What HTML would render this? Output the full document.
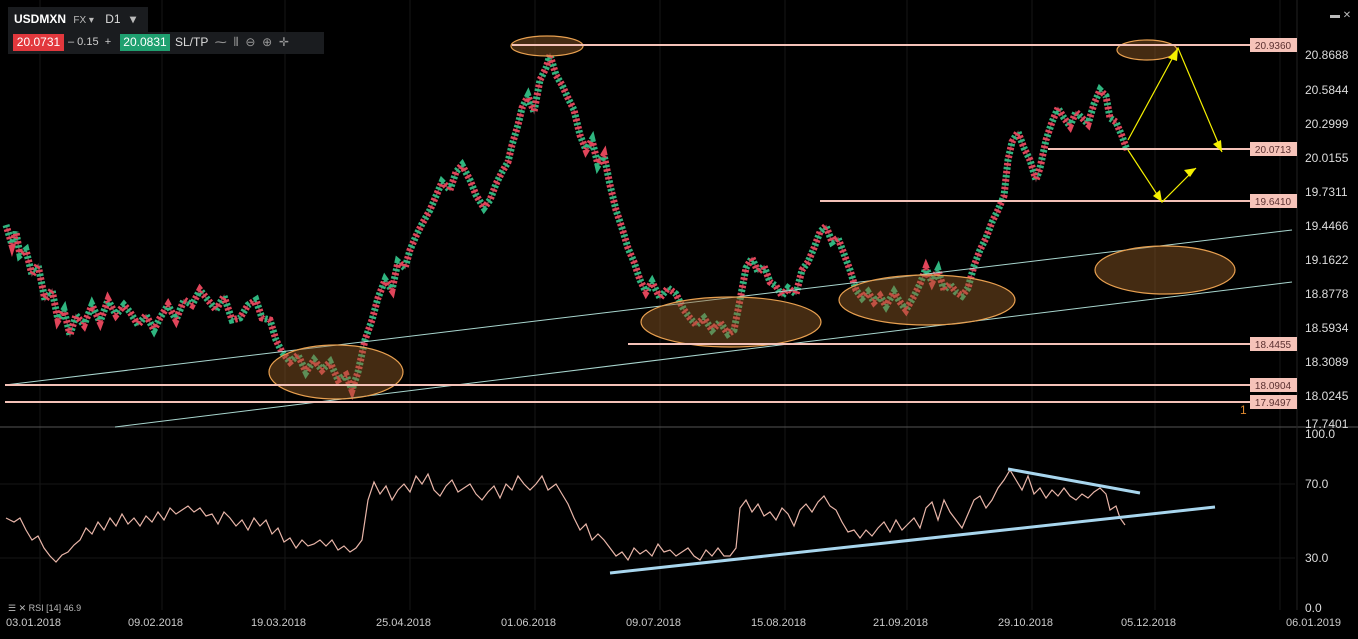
<!DOCTYPE html>
<html><head><meta charset="utf-8"><style>
html,body{margin:0;padding:0;background:#000;width:1358px;height:639px;overflow:hidden;font-family:"Liberation Sans",sans-serif}
svg{position:absolute;left:0;top:0}
.tb{position:absolute;left:8px;top:7px;width:140px;height:25px;background:#1a1c1f}
.tb2{position:absolute;left:8px;top:32px;width:316px;height:22px;background:#1a1c1f}
</style></head><body>
<svg width="1358" height="639" xmlns="http://www.w3.org/2000/svg" font-family="Liberation Sans">
<defs>
<path id="p" fill="none" d="M6,225 L12,245 16,232 20,255 26,250 32,275 38,265 45,300 52,290 58,320 64,310 70,335 76,315 84,325 92,305 100,322 108,300 116,315 124,305 130,312 138,325 146,315 154,330 160,318 168,305 176,320 184,300 192,305 200,290 208,300 216,310 224,296 232,320 240,318 248,305 256,300 262,318 270,320 276,340 282,352 290,362 298,355 306,372 314,360 322,370 330,362 338,380 346,375 352,390 358,372 365,340 372,320 378,298 385,280 392,290 398,262 405,268 410,250 416,236 422,224 430,210 436,196 442,182 450,190 456,172 462,165 470,180 476,195 484,208 490,200 496,184 502,172 508,162 512,145 518,125 522,108 528,96 534,112 540,80 546,68 550,55 556,75 562,85 568,98 574,110 580,135 586,150 592,140 598,165 604,155 610,185 616,210 622,228 628,248 634,262 640,280 646,292 652,282 660,298 668,288 676,294 684,310 690,318 696,325 704,318 712,330 720,322 728,334 734,330 740,300 746,268 752,258 758,272 764,266 770,282 776,286 782,296 788,288 796,294 802,270 808,262 814,248 820,232 826,226 832,242 838,238 844,254 850,270 856,290 862,298 868,292 874,302 880,296 886,306 894,292 900,302 906,310 914,296 920,284 926,268 932,282 938,270 944,290 950,284 956,292 962,296 968,288 974,266 980,250 986,238 992,222 998,210 1004,196 1008,160 1012,142 1018,132 1024,148 1030,160 1036,180 1040,168 1046,140 1052,122 1058,108 1064,118 1070,126 1076,112 1082,118 1088,124 1094,104 1100,90 1106,96 1110,118 1116,122 1122,136 1127,150"/>
</defs>
<g stroke="#161616">
<line x1="40" y1="0" x2="40" y2="610"/><line x1="162" y1="0" x2="162" y2="610"/><line x1="285" y1="0" x2="285" y2="610"/><line x1="410" y1="0" x2="410" y2="610"/><line x1="535" y1="0" x2="535" y2="610"/><line x1="660" y1="0" x2="660" y2="610"/><line x1="785" y1="0" x2="785" y2="610"/><line x1="907" y1="0" x2="907" y2="610"/><line x1="1032" y1="0" x2="1032" y2="610"/><line x1="1155" y1="0" x2="1155" y2="610"/><line x1="1280" y1="0" x2="1280" y2="610"/>
<line x1="0" y1="484" x2="1295" y2="484"/><line x1="0" y1="558" x2="1295" y2="558"/>
</g>
<line x1="0" y1="427" x2="1358" y2="427" stroke="#555"/>
<line x1="1297" y1="0" x2="1297" y2="610" stroke="#222"/>
<use href="#p" stroke="#7a3a44" stroke-width="1.5" />
<use href="#p" stroke="#2fb57f" stroke-width="7" stroke-dasharray="2.5 5.5"/>
<use href="#p" stroke="#e0455a" stroke-width="7" stroke-dasharray="2.5 5.5" stroke-dashoffset="4"/>
<line x1="5" y1="385" x2="1292" y2="230" stroke="#a9d6cf"/>
<line x1="115" y1="427" x2="1292" y2="282" stroke="#a9d6cf"/>
<g fill="rgba(150,95,40,0.45)" stroke="#e8a050" stroke-width="1.2">
<ellipse cx="547" cy="46" rx="36" ry="10"/><ellipse cx="1147" cy="50" rx="30" ry="10"/><ellipse cx="336" cy="372" rx="67" ry="27"/><ellipse cx="731" cy="322" rx="90" ry="25"/><ellipse cx="927" cy="300" rx="88" ry="25"/><ellipse cx="1165" cy="270" rx="70" ry="24"/>
</g>
<g stroke="#f4c2b8" stroke-width="2">
<line x1="512" y1="45" x2="1250" y2="45"/><line x1="1048" y1="149" x2="1250" y2="149"/><line x1="820" y1="201" x2="1250" y2="201"/><line x1="628" y1="344" x2="1250" y2="344"/><line x1="5" y1="385" x2="1250" y2="385"/><line x1="5" y1="402" x2="1250" y2="402"/>
</g>
<g fill="#f6c3b9"><rect x="1250" y="38" width="47" height="14"/><rect x="1250" y="142" width="47" height="14"/><rect x="1250" y="194" width="47" height="14"/><rect x="1250" y="337" width="47" height="14"/><rect x="1250" y="378" width="47" height="14"/><rect x="1250" y="395" width="47" height="14"/></g>
<g fill="#5a3030" font-size="10" text-anchor="middle">
<text x="1273" y="49">20.9360</text><text x="1273" y="153">20.0713</text><text x="1273" y="205">19.6410</text><text x="1273" y="348">18.4455</text><text x="1273" y="389">18.0904</text><text x="1273" y="406">17.9497</text></g>
<g stroke="#f5f000" stroke-width="1.2" fill="none"><polyline points="1128,140 1178,48 1222,152"/><polyline points="1128,150 1162,202 1196,168"/></g>
<g fill="#f5f000"><polygon points="1178,48 1168,58 1177,61"/><polygon points="1222,152 1213,144 1221,140"/><polygon points="1162,202 1153,196 1160,190"/><polygon points="1196,168 1184,170 1190,177"/></g>
<g fill="#ddd" font-size="12">
<text x="1305" y="59">20.8688</text><text x="1305" y="94">20.5844</text><text x="1305" y="128">20.2999</text><text x="1305" y="162">20.0155</text><text x="1305" y="196">19.7311</text><text x="1305" y="230">19.4466</text><text x="1305" y="264">19.1622</text><text x="1305" y="298">18.8778</text><text x="1305" y="332">18.5934</text><text x="1305" y="366">18.3089</text><text x="1305" y="400">18.0245</text><text x="1305" y="428">17.7401</text>
<text x="1305" y="438">100.0</text><text x="1305" y="488">70.0</text><text x="1305" y="562">30.0</text><text x="1305" y="612">0.0</text></g>
<text x="1240" y="414" fill="#e08a30" font-size="12">1 </text>
<text x="1330" y="18" fill="#bbb" font-size="10">▬ ✕</text>
<polyline fill="none" stroke="#e8b5a8" stroke-width="1.2" points="6,518 14,522 20,518 26,530 32,540 38,536 44,548 50,556 56,562 62,555 68,552 74,545 80,540 86,528 92,534 98,522 104,530 110,518 116,526 122,514 128,524 134,518 140,526 146,516 152,522 158,512 164,520 170,508 176,514 182,510 188,506 194,512 200,508 206,516 212,514 218,524 224,512 230,518 236,526 242,520 248,530 254,518 260,526 266,520 272,534 278,528 284,542 290,538 296,548 302,540 308,546 314,544 320,540 326,546 332,540 338,550 344,546 350,552 356,548 362,540 368,500 374,482 380,494 386,486 392,500 398,490 404,484 410,492 416,476 422,484 428,474 434,490 440,496 446,486 452,480 458,492 464,488 470,484 476,494 482,500 488,492 494,486 500,498 506,484 512,490 518,476 524,484 530,490 536,484 542,476 548,490 556,484 562,494 568,504 574,518 580,530 586,524 592,540 598,534 604,540 610,548 616,556 622,552 628,560 634,548 640,554 646,550 652,556 658,544 664,552 670,550 676,556 682,552 688,548 694,556 700,560 706,550 712,556 718,548 724,556 730,556 736,548 740,508 746,500 752,512 758,504 764,516 770,512 776,520 782,508 788,514 794,526 800,510 806,504 812,512 818,502 824,496 830,506 836,510 842,522 848,532 854,530 860,538 866,530 872,536 878,528 884,522 890,532 896,520 902,530 908,524 914,518 920,528 926,508 932,502 938,520 944,500 950,512 956,520 962,528 968,514 974,500 980,496 986,508 992,500 998,488 1004,480 1010,470 1016,480 1022,490 1028,476 1034,494 1040,488 1046,498 1052,490 1058,496 1064,488 1070,496 1076,500 1082,494 1088,498 1094,492 1100,488 1106,494 1110,510 1116,506 1120,518 1125,525"/>
<line x1="1008" y1="469" x2="1140" y2="493" stroke="#a8d6ee" stroke-width="3"/>
<line x1="610" y1="573" x2="1215" y2="507" stroke="#a8d6ee" stroke-width="3"/>
<g fill="#ccc" font-size="11">
<text x="6" y="626">03.01.2018</text><text x="128" y="626">09.02.2018</text><text x="251" y="626">19.03.2018</text><text x="376" y="626">25.04.2018</text><text x="501" y="626">01.06.2018</text><text x="626" y="626">09.07.2018</text><text x="751" y="626">15.08.2018</text><text x="873" y="626">21.09.2018</text><text x="998" y="626">29.10.2018</text><text x="1121" y="626">05.12.2018</text><text x="1286" y="626">06.01.2019</text></g>
<text x="8" y="611" fill="#bbb" font-size="9">☰ ✕ RSI [14] 46.9</text>
</svg>
<div class="tb"></div><div class="tb2"></div>
<div style="position:absolute;left:14px;top:12px;color:#fff;font-size:12px;font-weight:bold">USDMXN <span style="font-weight:normal;font-size:10px;color:#bbb;margin-left:4px">FX ▾</span> <span style="font-weight:normal;color:#ddd;margin-left:8px">D1</span> <span style="color:#bbb;margin-left:6px">▾</span></div>
<div style="position:absolute;left:13px;top:34px;height:17px;width:51px;background:#e2383d;color:#fff;font-size:12px;line-height:17px;text-align:center">20.0731</div>
<div style="position:absolute;left:68px;top:36px;color:#ccc;font-size:11px">– 0.15 &nbsp;+</div>
<div style="position:absolute;left:120px;top:34px;height:17px;width:50px;background:#1fa070;color:#fff;font-size:12px;line-height:17px;text-align:center">20.0831</div>
<div style="position:absolute;left:175px;top:35px;color:#ddd;font-size:12px">SL/TP &nbsp;<span style="color:#999">⁓ &nbsp;⦀ &nbsp;⊖ &nbsp;⊕ &nbsp;✛</span></div>
</body></html>
